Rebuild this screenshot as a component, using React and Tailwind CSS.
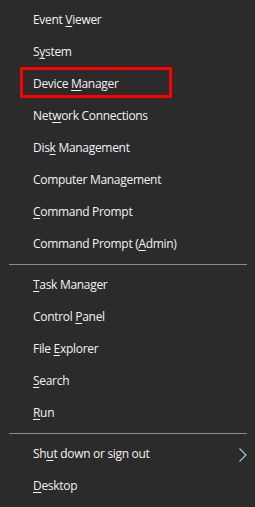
import React from 'react';

// Win+X menu items; key marks the underlined mnemonic letter index
const groups = [
  [
    { label: 'Event Viewer', key: 6 },
    { label: 'System', key: 1 },
    { label: 'Device Manager', key: 7, boxed: true },
    { label: 'Network Connections', key: 3 },
    { label: 'Disk Management', key: 3 },
    { label: 'Computer Management', key: 13 },
    { label: 'Command Prompt', key: 0 },
    { label: 'Command Prompt (Admin)', key: 16 },
  ],
  [
    { label: 'Task Manager', key: 0 },
    { label: 'Control Panel', key: 8 },
    { label: 'File Explorer', key: 5 },
    { label: 'Search', key: 0 },
    { label: 'Run', key: 0 },
  ],
  [
    { label: 'Shut down or sign out', key: 2, submenu: true },
    { label: 'Desktop', key: 0 },
  ],
];

function Label({ text, k }) {
  return (
    <span>
      {text.slice(0, k)}
      <u className="underline underline-offset-[2px] decoration-1">{text[k]}</u>
      {text.slice(k + 1)}
    </span>
  );
}

function MenuItem({ item }) {
  return (
    <div className="relative h-8 flex items-center pl-[33px] pr-2">
      <Label text={item.label} k={item.key} />
      {item.boxed && (
        <div className="absolute top-[-1px] left-[20px] w-[152px] h-[31px] border-[3px] border-[#ff0000]" />
      )}
      {item.submenu && (
        <svg className="absolute left-[238px] top-[8px]" width="10" height="16" viewBox="0 0 10 16">
          <path d="M1.5 2.5 L8 9 L1.5 15.5" fill="none" stroke="#b9c6d8" strokeWidth="1.1" />
        </svg>
      )}
    </div>
  );
}

export default function App() {
  return (
    <div
      className="w-[255px] h-[507px] bg-[#2b2b2b] text-[#f2f2f2] text-[12px] tracking-[-0.3px] pt-1 overflow-hidden"
      style={{ fontFamily: '"Open Sans", "Noto Sans", sans-serif' }}
    >
      {groups.map((group, gi) => (
        <div key={gi}>
          {gi > 0 && <div className="h-px bg-[#8c8c8c] ml-[9px] mr-[8px] my-1" />}
          {group.map((item) => (
            <MenuItem key={item.label} item={item} />
          ))}
        </div>
      ))}
    </div>
  );
}
